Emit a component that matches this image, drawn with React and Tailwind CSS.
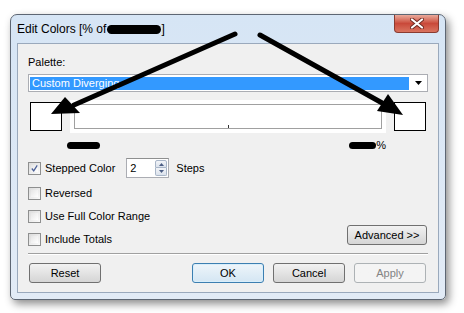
import React from 'react';

function Checkbox({ checked, label }) {
  return (
    <div className="flex items-center h-[20px]">
      <div className="w-[13px] h-[13px] border border-[#8e8f8f] bg-gradient-to-br from-[#dcdcdc] to-[#fbfbfb] p-[2px]">
        <div className="w-full h-full bg-gradient-to-br from-[#e6e6e6] to-[#ffffff] flex items-center justify-center">
          {checked && (
            <svg width="9" height="9" viewBox="0 0 9 9">
              <path d="M1 4.5 L3.5 7.5 L8 0.5" fill="none" stroke="#4a5f97" strokeWidth="1.6" />
            </svg>
          )}
        </div>
      </div>
      <span className="ml-[4px] text-[11px] text-black">{label}</span>
    </div>
  );
}

function Button({ children, variant, className = '' }) {
  const styles = {
    default: 'border-[#707070] from-[#f2f2f2] to-[#d5d5d5] text-black',
    focus: 'border-[#3c7fb1] from-[#eef5fa] to-[#d4e6f3] text-black shadow-[inset_0_0_0_1px_#d8eefb]',
    disabled: 'border-[#adb2b5] from-[#f4f4f4] to-[#f4f4f4] text-[#838383]',
  };
  return (
    <div
      className={`h-[20px] w-[72px] rounded-[3px] border bg-gradient-to-b ${styles[variant || 'default']} flex items-center justify-center text-[11px] ${className}`}
    >
      {children}
    </div>
  );
}

export default function App() {
  return (
    <div className="relative w-[464px] h-[313px] bg-white overflow-hidden pt-[14px] pl-[10px] font-['Liberation_Sans',Arial,sans-serif]">
      {/* Window */}
      <div className="w-[436px] h-[286px] rounded-t-[7px] rounded-b-[5px] border border-[#5d6673] bg-gradient-to-b from-[#d6e5f5] to-[#e2ebf6] flex flex-col shadow-[3px_4px_8px_rgba(0,0,0,0.45)]">
        {/* Title bar */}
        <div className="h-[28px] flex items-start justify-between">
          <div className="h-[28px] flex items-center pl-[6px] text-[12px] text-black">
            <span>Edit Colors [% of</span>
            <span className="ml-[1px] w-[54px] h-[9px] rounded-full bg-black" />
            <span>]</span>
          </div>
          <div className="mr-[6px] w-[45px] h-[18px] rounded-b-[4px] border border-t-0 border-[#8a3b30] bg-gradient-to-b from-[#e9a99b] via-[#c9493a] to-[#d9735f] flex items-center justify-center">
            <svg width="14" height="11" viewBox="0 0 14 11">
              <path d="M2 1.5 L12 9.5 M12 1.5 L2 9.5" stroke="#6e2a22" strokeWidth="4" strokeLinecap="round" />
              <path d="M2 1.5 L12 9.5 M12 1.5 L2 9.5" stroke="#ffffff" strokeWidth="2.2" strokeLinecap="round" />
            </svg>
          </div>
        </div>

        {/* Client area */}
        <div className="mx-[6px] h-[250px] border border-[#9aa9bc] bg-[#f0f0f0] pl-[10px] pr-[11px] flex flex-col">
          <div className="mt-[11px] h-[14px] leading-[14px] text-[11px] text-black">Palette:</div>

          {/* Dropdown */}
          <div className="mt-[5px] w-[400px] h-[18px] border border-[#abadb3] bg-white flex items-center pl-[1px]">
            <div className="w-[379px] h-[13px] bg-[#3399ff] text-white text-[11px] leading-[13px] pl-[2px]">Custom Diverging</div>
            <div className="flex-1 flex justify-center">
              <svg width="7" height="4" viewBox="0 0 7 4">
                <path d="M0 0 L7 0 L3.5 4 Z" fill="#000" />
              </svg>
            </div>
          </div>

          {/* Colour row */}
          <div className="mt-[8px] h-[33px] flex items-start">
            <div className="ml-[2px] mt-[2px] w-[32px] h-[29px] border border-black bg-white" />
            <div className="ml-[8px] w-[316px] h-[33px] bg-white p-[4px]">
              <div className="w-full h-full border border-[#a0a0a0] bg-white flex justify-center items-end">
                <div className="w-[1px] h-[3px] bg-[#333]" />
              </div>
            </div>
            <div className="ml-[8px] mt-[2px] w-[32px] h-[29px] border border-black bg-white" />
          </div>

          {/* Min / max labels */}
          <div className="mt-[8px] ml-[39px] w-[319px] h-[8px] flex justify-between items-center">
            <div className="w-[33px] h-[7px] rounded-full bg-black" />
            <div className="flex items-center">
              <div className="w-[27px] h-[7px] rounded-full bg-black" />
              <span className="text-[11px] leading-[8px] text-black">%</span>
            </div>
          </div>

          {/* Stepped colour */}
          <div className="mt-[9px] h-[20px] flex items-center">
            <Checkbox checked label="Stepped Color" />
            <div className="ml-[11px] w-[43px] h-[20px] border border-[#abadb3] border-t-[#8e8f8f] bg-white flex items-center justify-between pl-[3px] pr-[1px]">
              <span className="text-[11px] text-black">2</span>
              <div className="w-[12px] h-[16px] flex flex-col">
                <div className="h-[8px] border border-[#a9b6c8] rounded-t-[2px] bg-gradient-to-b from-[#f3f5f9] to-[#dbe2ec] flex items-center justify-center">
                  <svg width="5" height="3" viewBox="0 0 5 3"><path d="M0 3 L5 3 L2.5 0 Z" fill="#4b5d84" /></svg>
                </div>
                <div className="h-[8px] border border-t-0 border-[#a9b6c8] rounded-b-[2px] bg-gradient-to-b from-[#f3f5f9] to-[#dbe2ec] flex items-center justify-center">
                  <svg width="5" height="3" viewBox="0 0 5 3"><path d="M0 0 L5 0 L2.5 3 Z" fill="#4b5d84" /></svg>
                </div>
              </div>
            </div>
            <span className="ml-[7px] text-[11px] text-black">Steps</span>
          </div>

          <div className="mt-[5px]"><Checkbox label="Reversed" /></div>
          <div className="mt-[3px]"><Checkbox label="Use Full Color Range" /></div>

          <div className="mt-[-1px] h-[24px] flex justify-between items-start">
            <div className="mt-[4px]"><Checkbox label="Include Totals" /></div>
            <Button className="w-[80px]">Advanced &gt;&gt;</Button>
          </div>

          {/* Separator */}
          <div className="mt-[4px] h-[2px] w-[400px] border-t border-[#a0a0a0] border-b-white border-b" />

          {/* Buttons */}
          <div className="mt-[8px] flex items-center">
            <Button className="ml-[1px]">Reset</Button>
            <Button variant="focus" className="ml-[91px]">OK</Button>
            <Button className="ml-[9px]">Cancel</Button>
            <Button variant="disabled" className="ml-[9px]">Apply</Button>
          </div>
        </div>
      </div>

      {/* Annotation arrows drawn over the screenshot */}
      <svg className="absolute left-0 top-0 pointer-events-none" width="464" height="313" viewBox="0 0 464 313">
        <line x1="235" y1="34" x2="74" y2="105" stroke="#000" strokeWidth="5" strokeLinecap="round" />
        <polygon points="51,114 65,97 80,113" fill="#000" />
        <line x1="260" y1="35" x2="384" y2="104" stroke="#000" strokeWidth="5" strokeLinecap="round" />
        <polygon points="403,115 377,111 388,94" fill="#000" />
      </svg>
    </div>
  );
}
